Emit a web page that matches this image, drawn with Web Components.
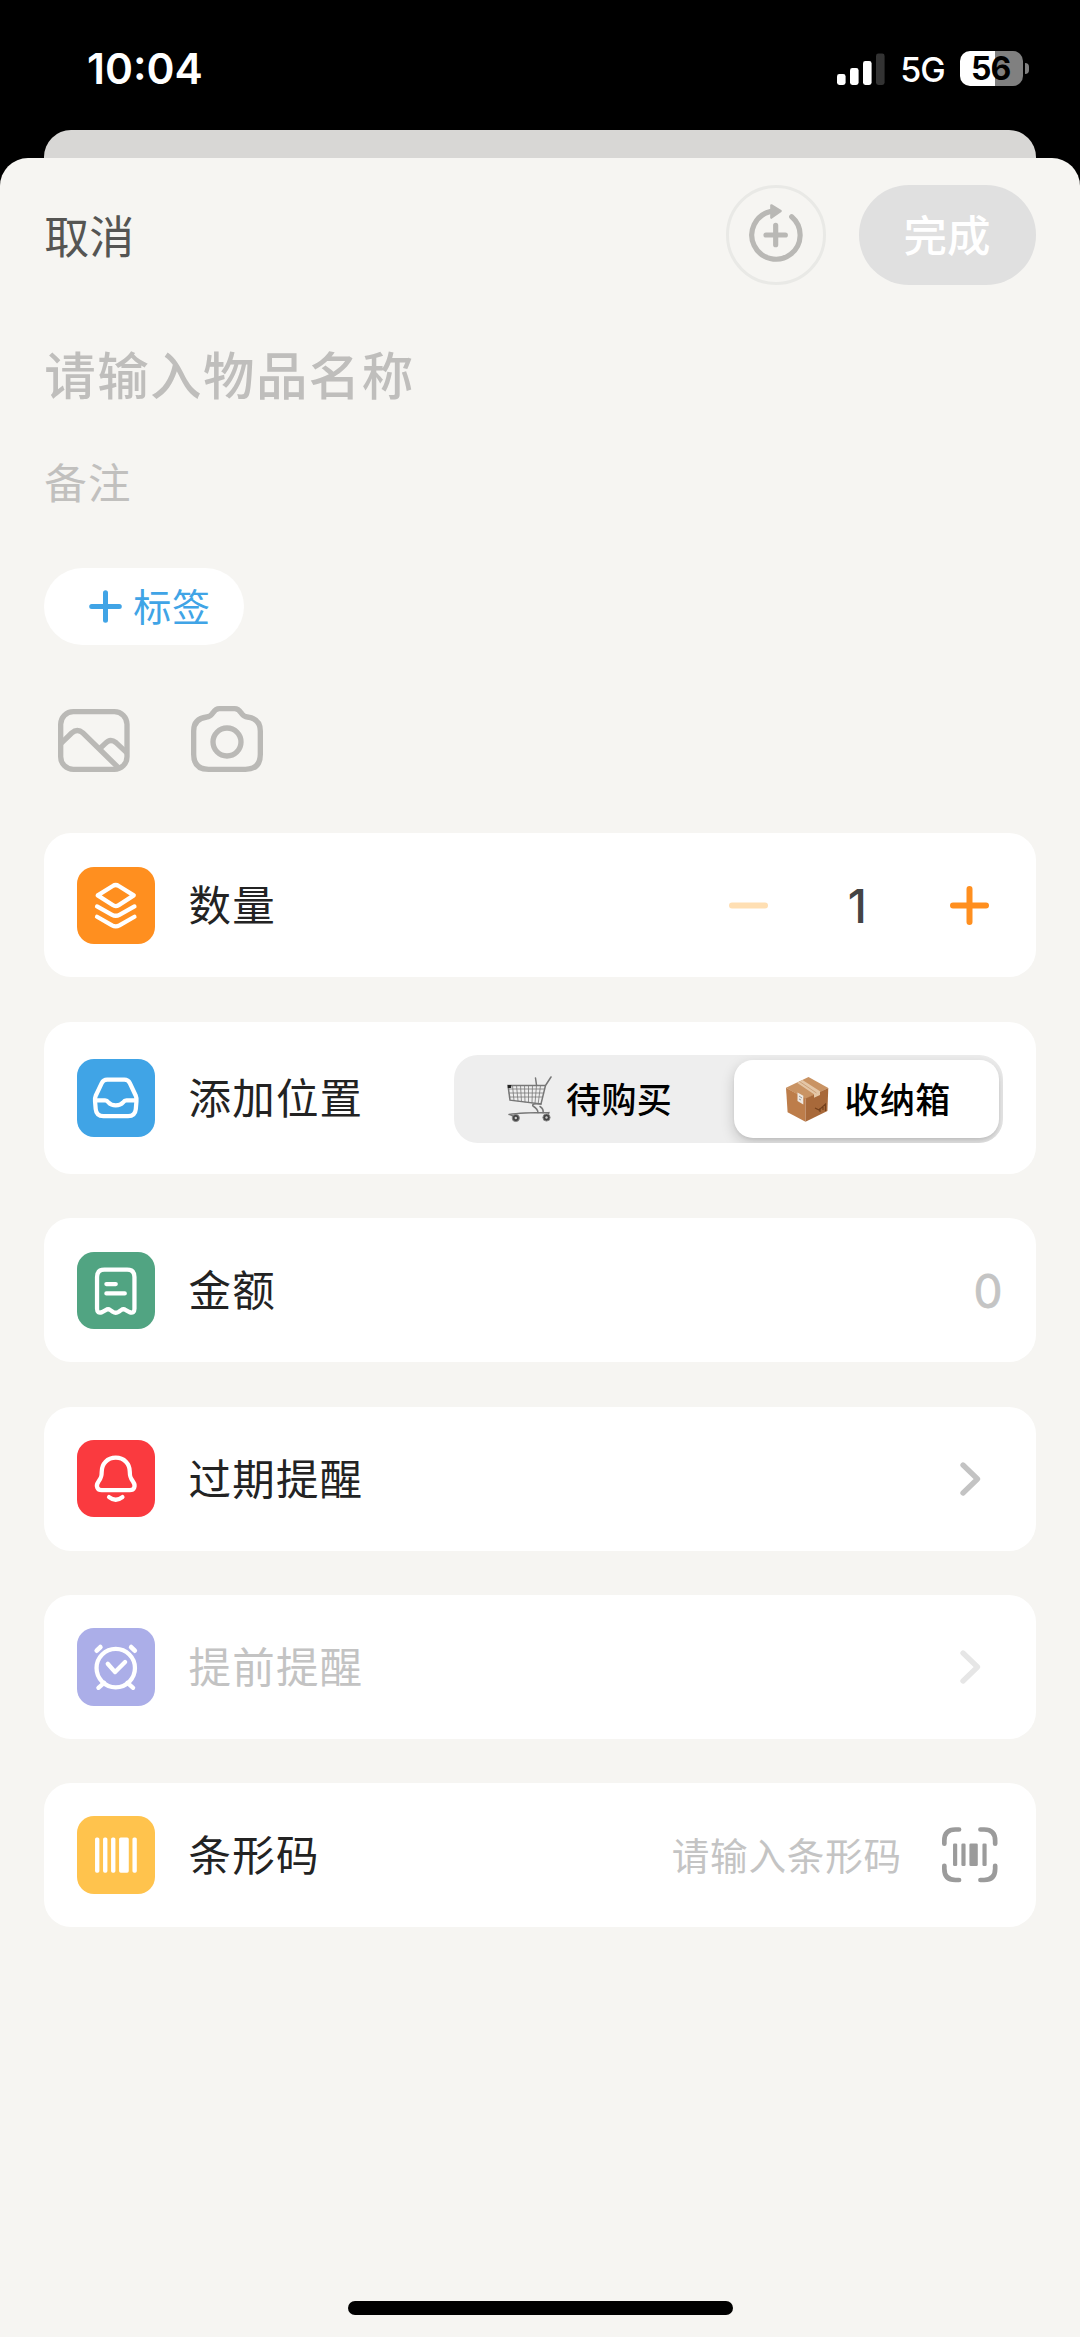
<!DOCTYPE html>
<html lang="zh-CN">
<head>
<meta charset="utf-8">
<title>添加物品</title>
<style>
html,body{margin:0;padding:0;background:#000}
body{width:1080px;height:2337px;overflow:hidden;font-family:Inter,"Noto Sans CJK SC",sans-serif}
</style>
</head>
<body>
<item-editor></item-editor>
<script>
const define = (name, html) => customElements.define(name, class extends HTMLElement {
  constructor() {
    super();
    this.attachShadow({mode: 'open'}).innerHTML = html;
  }
});

const GLYPHS = {
  layers: `<g fill="none" stroke="#fff" stroke-width="12.8" stroke-linecap="round" stroke-linejoin="round"><path d="M62 85L107 57Q116 51 125 57L170 85L125 114Q116 120 107 114Z"/><path d="M60 118L105 143Q116 149 127 143L172 118"/><path d="M60 149L105 175Q116 181 127 175L172 149"/></g>`,
  inbox: `<g fill="none" stroke="#fff" stroke-width="12.8" stroke-linejoin="round"><path d="M90 62H142Q153 62 158 72L176 110Q179 117 178 126L176 150Q174 171 153 171H79Q58 171 56 150L54 126Q53 117 56 110L74 72Q79 62 90 62Z"/><path d="M56 124H84Q90 124 94 130Q102 139 116 139Q130 139 138 130Q142 124 148 124H176"/></g>`,
  receipt: `<g fill="none" stroke="#fff" stroke-width="12.8" stroke-linecap="round" stroke-linejoin="round"><path d="M60 170V75Q60 53 82 53H150Q172 53 172 75V170Q172 185 157 180L146 174Q139 169 132 174L125 179Q116 185 107 179L100 174Q93 169 86 174L75 180Q60 185 60 170Z"/><path d="M88 96H116M88 124H143"/></g>`,
  bell: `<g fill="none" stroke="#fff" stroke-width="12.8" stroke-linecap="round"><path d="M116 53C91 53 74 71 74 95C74 112 71 115 64 125C55 138 61 150 74 150H158C171 150 177 138 168 125C161 115 158 112 158 95C158 71 141 53 116 53Z"/><path d="M96 171Q116 187 136 171"/></g>`,
  alarm: `<g fill="none" stroke="#fff" stroke-width="12.8" stroke-linecap="round" stroke-linejoin="round"><circle cx="116" cy="120" r="57.5"/><path d="M81 164L64 179M151 164L168 179M92 107L114 132L144 102"/><path stroke-width="14" d="M59 68L70 57M173 68L162 57"/></g>`,
  barcode: `<g fill="#fff"><rect x="54" y="64" width="13" height="106" rx="5"/><rect x="78" y="64" width="13" height="106" rx="5"/><rect x="102" y="64" width="13" height="106" rx="5"/><rect x="126" y="64" width="29" height="106" rx="5"/><rect x="166" y="64" width="13" height="106" rx="5"/></g>`
};

/* Coloured square with a white glyph */
customElements.define('icon-tile', class extends HTMLElement {
  connectedCallback() {
    if (this.shadowRoot) return;
    this.attachShadow({mode: 'open'}).innerHTML = `<style>
      :host{display:block;flex:none;width:77.5px;height:77.5px;border-radius:17px;background:${this.getAttribute('color')}}
      svg{display:block;width:100%;height:100%}</style>
      <svg viewBox="0 0 232 232">${GLYPHS[this.getAttribute('name')]}</svg>`;
  }
});

define('status-bar', `<style>
  :host{display:flex;box-sizing:border-box;height:130px;padding:0 51px 0 87px;justify-content:space-between;color:#fff}
  .time{font-size:42.5px;font-weight:600;line-height:60px;margin-top:39px}
  .right{display:flex;height:36px;margin-top:50.5px;align-items:center}
  .sig{width:48px;height:32px;margin-right:15px}
  .net{font-size:34px;font-weight:500;line-height:36px;width:45px;margin-right:14.5px;letter-spacing:-1px;white-space:nowrap;margin-top:3px}
  .bat{box-sizing:border-box;width:62.7px;height:35.5px;padding-right:1px;border-radius:10px;background:linear-gradient(90deg,#fff 35px,#808080 35px);color:#000;font-size:32px;font-weight:700;line-height:36px;text-align:center;letter-spacing:-1px}
  .nub{width:4px;height:11px;border-radius:0 5px 5px 0;background:#808080;margin-left:2.5px}
</style>
<div class="time">10:04</div>
<div class="right">
  <svg class="sig" viewBox="0 0 48 32"><g fill="#fff"><rect x="0" y="21" width="8.6" height="11" rx="2.4"/><rect x="13" y="15" width="8.6" height="17" rx="2.4"/><rect x="26" y="8" width="8.6" height="24" rx="2.4"/></g><rect x="39" y="0.5" width="8.6" height="31.5" rx="2.4" fill="#333"/></svg>
  <div class="net">5G</div><div class="bat">56</div><div class="nub"></div>
</div>`);

define('nav-bar', `<style>
  :host{display:flex;box-sizing:border-box;height:99.7px;align-items:center}
  .cancel{flex:1;color:#555553;font-size:45px;line-height:60px;margin-top:6px}
  .again{box-sizing:border-box;width:99.7px;height:99.7px;border:3px solid #e9e9e6;border-radius:50%;display:flex;align-items:center;justify-content:center;margin-right:33px}
  .again svg{width:53.7px;height:57.7px;margin-top:-4px}
  .done{width:177.2px;height:99.7px;border-radius:50px;background:#e0e0e0;color:#fff;text-align:center;font-size:43.5px;font-weight:500;line-height:103px}
</style>
<div class="cancel">取消</div>
<div class="again"><svg viewBox="0 0 161 173"><path d="M128 38A72.5 72.5 0 1 1 64 22.5" fill="none" stroke="#b9b8b5" stroke-width="15.5" stroke-linecap="round"/><path d="M67 4L95 21L67 41Z" fill="#b9b8b5" stroke="#b9b8b5" stroke-width="7" stroke-linejoin="round"/><path d="M51 93H109M80 64V122" stroke="#b9b8b5" stroke-width="15.5" stroke-linecap="round"/></svg></div>
<div class="done">完成</div>`);

define('tag-button', `<style>
  :host{display:flex;box-sizing:border-box;width:200px;height:77.5px;border-radius:39px;background:#fff;align-items:center;padding-left:44.5px;color:#40a4e6}
  svg{width:33px;height:33px;margin-right:11.5px}
  span{font-size:38px;line-height:50px;letter-spacing:.6px;margin-top:1px}
</style>
<svg viewBox="0 0 33 33"><path d="M2.7 16.5H30.3M16.5 2.7V30.3" stroke="currentColor" stroke-width="5" stroke-linecap="round"/></svg><span><slot></slot></span>`);

define('photo-actions', `<style>
  :host{display:flex;gap:61px;padding-left:14px;align-items:flex-end;height:66px}
  svg{display:block}
  g{fill:none;stroke:#bab9b6;stroke-width:16}
</style>
<svg width="71.7" height="63" viewBox="0 0 215 189"><g stroke-linecap="round"><rect x="8" y="8" width="199" height="173" rx="38"/><path stroke-linecap="butt" d="M9 103L41 72Q58 57 75 72L181 176"/><path stroke-linecap="butt" d="M124 120L142 103Q157 87 174 101L206 131"/></g></svg>
<svg width="72" height="66" viewBox="0 0 216 198"><g stroke-linejoin="round"><path d="M47 33C59 32 60 28 66 20Q74 8 85 8H131Q142 8 150 20C156 28 157 32 169 33Q208 38 208 75V145Q208 190 163 190H53Q8 190 8 145V75Q8 38 47 33Z"/><circle cx="108" cy="108" r="42"/></g></svg>`);

/* White form row: leading icon, label, trailing control */
define('form-row', `<style>
  :host{display:flex;box-sizing:border-box;height:144px;border-radius:27px;background:#fff;align-items:center;padding:0 33.2px;color:#232323}
  :host([tall]){height:152.3px}
  :host([disabled]){color:#c3c3c3}
  .label{flex:1;font-size:42.5px;line-height:60px;letter-spacing:1.2px;margin:2px 0 0 33.5px;white-space:nowrap}
</style>
<slot name="icon"></slot><div class="label"><slot></slot></div><slot name="end"></slot>`);

define('qty-stepper', `<style>
  :host{display:flex;align-items:center;padding-right:13.5px}
  svg{display:block;width:39px;height:39px}
  span{box-sizing:border-box;width:182.5px;padding-right:3px;text-align:center;font-size:46px;line-height:56px;margin-top:1px;font-weight:500;color:#444}
</style>
<svg viewBox="0 0 39 39"><path d="M3 19.5H36" stroke="#ffdfb3" stroke-width="6" stroke-linecap="round"/></svg>
<span>1</span>
<svg viewBox="0 0 39 39"><path d="M3 19.5H36M19.5 3V36" stroke="#ff8f1f" stroke-width="6" stroke-linecap="round"/></svg>`);

define('place-switch', `<style>
  :host{display:flex;box-sizing:border-box;width:548.5px;height:88.6px;margin-top:2.6px;border-radius:24px;background:#eee;padding:5.6px 3.5px 5.6px 0;overflow:hidden;color:#000;font-size:35px;font-weight:500;line-height:50px}
  div{display:flex;align-items:center;box-sizing:border-box}
  .a{width:279.5px;padding-left:53px}
  .b{flex:1;padding-left:52px;border-radius:19px;background:#fff;box-shadow:0 5px 14px rgba(0,0,0,.18),0 2px 3px rgba(0,0,0,.06)}
  svg{flex:none;width:45px;height:47px}
  span{margin-top:1px;letter-spacing:.4px;white-space:nowrap}
</style>
<div class="a"><svg viewBox="0 0 45 47" style="margin-right:14px"><g fill="none" stroke="#777" stroke-linecap="round">
<path d="M1 9.5H38.5L34 28L3 24.2ZM44 1L38.5 9.5" stroke-width="1.5"/>
<path d="M1.5 13H37.7M2 17H36.7M2.3 21H35.5M5.5 9.5L7 24.5M9.5 9.5L11 25M13.5 9.5L14.5 25.5M17.5 9.5L18 26M21.5 9.5V26.5M25.5 9.5L25 27M29.5 9.5L28 27.5M33.5 9.5L31.2 27.7" stroke-width=".8"/>
<path d="M28.5 2L29.5 9M34 28Q24 27 26 30Q31 33 31 37M36 37Q37 33 33 30.5M2 38.5Q14 36.5 42 36.5M3 38.5L8 41M42 36.5L40 41" stroke-width="1.5"/></g>
<rect x=".8" y="9" width="3.4" height="3" fill="#222"/>
<g fill="#444" stroke="#888" stroke-width="1"><circle cx="8.8" cy="42" r="3.6"/><circle cx="39.5" cy="41.5" r="3.6"/></g><circle cx="8.8" cy="42" r="1.2" fill="#ccc"/><circle cx="39.5" cy="41.5" r="1.2" fill="#ccc"/></svg><span>待购买</span></div>
<div class="b"><svg viewBox="0 0 45 47" style="margin-right:14px"><g transform="translate(0 1)">
<path d="M22.5 0L42.3 11L19.5 22L0 10.7Z" fill="#c99363"/>
<path d="M0 10.7L19.5 21.5V44.8L1.6 35.3Z" fill="#bd7d4a"/>
<path d="M42.3 11L19.5 21.5V44.8L41.4 34Z" fill="#a8693a"/>
<path d="M11 5.8L16.5 2.9L34 14.2V18L28 20.8V17.3Z" fill="#e4c6a6"/>
<path d="M13.5 4.5L30.5 16" stroke="#cda27b" stroke-width="1"/>
<path d="M11.5 15.5L17.3 18.8V27.5L11.5 24Z" fill="#eee8e1"/><path d="M13 19L16 21M13 22L15 23" stroke="#999" stroke-width="1"/>
<path d="M29 31L33 33L39.5 27V34M34 31V35M37 30V33" fill="none" stroke="#74401c" stroke-width="1.2"/></g></svg><span>收纳箱</span></div>`);

define('amount-value', `<style>:host{display:block;font-size:46px;line-height:56px;margin-top:1px;color:#c4c4c4;font-weight:400;-webkit-text-stroke:.8px #c4c4c4}</style><slot></slot>`);

define('chevron-icon', `<style>:host{display:block;color:#c3c3c3;padding-right:21.5px}:host([faint]){color:#e6e6e6}svg{display:block;width:21px;height:34px}</style>
<svg viewBox="0 0 21 34"><path d="M3 3L17.5 17L3 31" fill="none" stroke="currentColor" stroke-width="5.3" stroke-linecap="round" stroke-linejoin="round"/></svg>`);

define('barcode-field', `<style>
  :host{display:flex;align-items:center;padding-right:5px;color:#c4c4c4}
  span{font-size:37.6px;line-height:50px;letter-spacing:.8px;margin:3px 40px 0 0;white-space:nowrap}
  svg{display:block;width:55.5px;height:55.5px}
</style>
<span>请输入条形码</span>
<svg viewBox="0 0 166 166"><path d="M7 50V41Q7 7.5 40 7.5H51M115 7.5H126Q159 7.5 159 41V50M159 116V125Q159 158.5 126 158.5H115M51 158.5H40Q7 158.5 7 125V116" fill="none" stroke="#9b9b9b" stroke-width="14" stroke-linecap="round"/><g fill="#9b9b9b"><rect x="33" y="49" width="12.5" height="68" rx="4"/><rect x="58" y="49" width="12.5" height="68" rx="4"/><rect x="82" y="49" width="25" height="68" rx="4"/><rect x="121" y="49" width="12.5" height="68" rx="4"/></g></svg>`);

define('item-editor', `<style>
  :host{display:flex;flex-direction:column;width:1080px;height:2337px;background:#000}
  .back{flex:none;height:28px;margin:0 44.3px;background:#d8d7d5;border-radius:27px 27px 0 0}
  .sheet{flex:1;display:flex;flex-direction:column;box-sizing:border-box;padding:27.3px 44.3px 22px;background:#f6f5f2;border-radius:28px 28px 0 0}
  .name{margin-top:56px;height:70px;line-height:70px;font-size:51.5px;font-weight:500;letter-spacing:1.4px;color:#bfbebc}
  .note{margin-top:43.5px;height:60px;line-height:60px;font-size:42.5px;letter-spacing:1.2px;color:#c1c0be}
  tag-button{margin-top:53.5px}
  photo-actions{margin-top:60.5px}
  .rows{display:flex;flex-direction:column;gap:44.3px;margin-top:61.4px}
  .home{width:385px;height:14px;border-radius:7px;background:#000;margin:auto auto 0}
</style>
<status-bar></status-bar>
<div class="back"></div>
<div class="sheet">
  <nav-bar></nav-bar>
  <div class="name">请输入物品名称</div>
  <div class="note">备注</div>
  <tag-button>标签</tag-button>
  <photo-actions></photo-actions>
  <div class="rows">
    <form-row><icon-tile slot="icon" name="layers" color="#ff8f1f"></icon-tile>数量<qty-stepper slot="end"></qty-stepper></form-row>
    <form-row tall><icon-tile slot="icon" name="inbox" color="#40a4e6"></icon-tile>添加位置<place-switch slot="end"></place-switch></form-row>
    <form-row><icon-tile slot="icon" name="receipt" color="#51a482"></icon-tile>金额<amount-value slot="end">0</amount-value></form-row>
    <form-row><icon-tile slot="icon" name="bell" color="#fa3a3f"></icon-tile>过期提醒<chevron-icon slot="end"></chevron-icon></form-row>
    <form-row disabled><icon-tile slot="icon" name="alarm" color="#abaee8"></icon-tile>提前提醒<chevron-icon slot="end" faint></chevron-icon></form-row>
    <form-row><icon-tile slot="icon" name="barcode" color="#ffc34d"></icon-tile>条形码<barcode-field slot="end"></barcode-field></form-row>
  </div>
  <div class="home"></div>
</div>`);
</script>
</body>
</html>
